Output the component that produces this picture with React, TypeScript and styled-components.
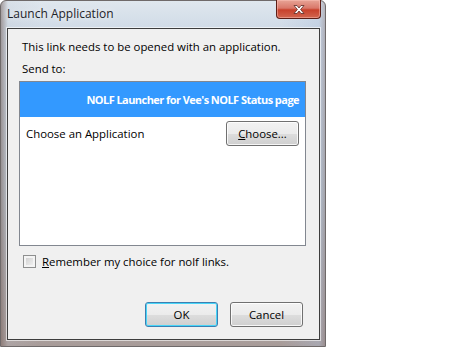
import React from "react";
import styled, { createGlobalStyle } from "styled-components";

const Global = createGlobalStyle`
  html, body {
    margin: 0;
    padding: 0;
    background: #ffffff;
  }
  body {
    font-family: "Open Sans", "Noto Sans", sans-serif;
    font-size: 11.4px;
    color: #000;
  }
`;

const Page = styled.div`
  width: 467px;
  height: 348px;
  background: #fff;
`;

const Window = styled.div`
  width: 326px;
  height: 347px;
  box-sizing: border-box;
  border-radius: 6px 6px 0 0;
  border: 1px solid #6f6a6a;
  background: linear-gradient(
      90deg,
      rgba(120, 100, 95, 0.55) 0px,
      rgba(190, 195, 205, 0.2) 7px,
      rgba(255, 255, 255, 0) 40px,
      rgba(255, 255, 255, 0) 280px,
      rgba(170, 190, 220, 0.35) 318px,
      rgba(130, 110, 110, 0.5) 326px
    ),
    linear-gradient(180deg, #dfe7ee 0px, #cfdae6 30px, #b9c3cc 200px, #a89b98 347px);
  display: flex;
  flex-direction: column;
`;

const TitleBar = styled.div`
  height: 27px;
  display: flex;
  align-items: flex-start;
  padding-left: 6px;
  padding-right: 4px;
`;

const Title = styled.div`
  font-size: 12px;
  line-height: 12px;
  margin-top: 7px;
  color: #1e2329;
  text-shadow: 0 0 6px rgba(255, 255, 255, 0.9);
`;

const CloseButton = styled.div`
  margin-left: auto;
  margin-top: -1px;
  width: 45px;
  height: 19px;
  box-sizing: border-box;
  border: 1px solid #5c1e16;
  border-top: none;
  border-radius: 0 0 4px 4px;
  background: linear-gradient(180deg, #e8a496 0%, #d9786a 45%, #c8412b 55%, #d2664f 100%);
  box-shadow: inset 0 0 0 1px rgba(255, 200, 190, 0.45);
  display: flex;
  align-items: center;
  justify-content: center;
`;

const Client = styled.div`
  flex: 1;
  margin: 0 5px 6px 6px;
  border: 1px solid #3d3d3d;
  box-shadow: 0 0 0 1px rgba(255, 255, 255, 0.6);
  background: #f0f0f0;
  display: flex;
  flex-direction: column;
`;

const Label = styled.div<{ $top: number }>`
  margin: ${(p) => p.$top}px 0 0 14px;
  line-height: 15px;
  height: 15px;
`;

const ListBox = styled.div`
  margin: 5px 0 0 11px;
  width: 287px;
  height: 165px;
  box-sizing: border-box;
  border: 1px solid #828790;
  background: #fff;
  display: flex;
  flex-direction: column;
`;

const Selected = styled.div`
  height: 35px;
  background: #3399ff;
  color: #fff;
  font-weight: 700;
  font-size: 11px;
  letter-spacing: -0.55px;
  display: flex;
  align-items: center;
  justify-content: flex-end;
  padding-right: 6px;
`;

const ItemRow = styled.div`
  height: 32px;
  display: flex;
  align-items: center;
  padding: 0 6px;
  justify-content: space-between;
`;

const Button = styled.div<{ $default?: boolean }>`
  width: 73px;
  height: 25px;
  box-sizing: border-box;
  border-radius: 3px;
  border: 1px solid ${(p) => (p.$default ? "#3c7fb1" : "#707070")};
  box-shadow: inset 0 0 0 1px ${(p) => (p.$default ? "#48d5f8" : "rgba(255,255,255,0.8)")};
  background: linear-gradient(180deg, #f2f2f2 0%, #ebebeb 50%, #dddddd 51%, #cfcfcf 100%);
  display: flex;
  align-items: center;
  justify-content: center;
  color: #000;
`;

const CheckRow = styled.div`
  margin: 8px 0 0 15px;
  display: flex;
  align-items: center;
  gap: 6px;
  height: 15px;
`;

const Check = styled.div`
  width: 13px;
  height: 13px;
  box-sizing: border-box;
  border: 1px solid #8e8f8f;
  background: linear-gradient(135deg, #cbcbcb 0%, #f6f6f6 100%);
  box-shadow: inset 0 0 0 2px #f4f4f4;
`;

const Footer = styled.div`
  margin-top: auto;
  margin-bottom: 12px;
  display: flex;
  justify-content: flex-end;
  gap: 12px;
  padding-right: 16px;
`;

const Key = styled.span`
  text-decoration: underline;
`;

const CloseGlyph = () => (
  <svg width="14" height="11" viewBox="0 0 14 11">
    <path
      d="M2 1.5 L5 1.5 L7 4 L9 1.5 L12 1.5 L8.6 5.5 L12 9.5 L9 9.5 L7 7 L5 9.5 L2 9.5 L5.4 5.5 Z"
      fill="#ffffff"
      stroke="#5a2a24"
      strokeWidth="0.8"
    />
  </svg>
);

export default function App() {
  return (
    <Page>
      <Global />
      <Window>
        <TitleBar>
          <Title>Launch Application</Title>
          <CloseButton>
            <CloseGlyph />
          </CloseButton>
        </TitleBar>
        <Client>
          <Label $top={10}>This link needs to be opened with an application.</Label>
          <Label $top={7}>Send to:</Label>
          <ListBox>
            <Selected>NOLF Launcher for Vee's NOLF Status page</Selected>
            <ItemRow>
              <span>Choose an Application</span>
              <Button>
                <span>
                  <Key>C</Key>hoose...
                </span>
              </Button>
            </ItemRow>
          </ListBox>
          <CheckRow>
            <Check />
            <span>
              <Key>R</Key>emember my choice for nolf links.
            </span>
          </CheckRow>
          <Footer>
            <Button $default>OK</Button>
            <Button>Cancel</Button>
          </Footer>
        </Client>
      </Window>
    </Page>
  );
}
